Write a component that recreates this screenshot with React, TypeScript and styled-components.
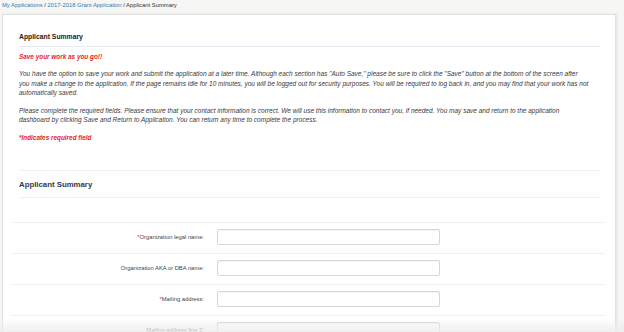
import React from 'react';
import styled, { createGlobalStyle } from 'styled-components';

const GlobalStyle = createGlobalStyle`
  html, body {
    margin: 0;
    padding: 0;
    background: #f6f6f5;
    font-family: "Liberation Sans", Arial, sans-serif;
    overflow: hidden;
  }
`;

interface IField {
  label: string;
  required: boolean;
}

const FIELDS: IField[] = [
  { label: 'Organization legal name:', required: true },
  { label: 'Organization AKA or DBA name:', required: false },
  { label: 'Mailing address:', required: true },
  { label: 'Mailing address line 2:', required: false },
];

const Page = styled.div`
  width: 624px;
  height: 332px;
  position: relative;
  overflow: hidden;
`;

const Breadcrumb = styled.div`
  height: 14px;
  padding-left: 2px;
  font-size: 5.85px;
  line-height: 10px;
  color: #333;
  white-space: nowrap;
`;

const Crumb = styled.a`
  color: #2f7bbd;
  text-decoration: none;
`;

const Panel = styled.div`
  width: 612px;
  margin-left: 2px;
  background: #fff;
  border: 1px solid #e2e2e2;
  box-shadow: 1px 0 2px rgba(0, 0, 0, 0.08);
  min-height: 330px;
`;

const Intro = styled.div`
  padding: 17px 15px 0 16px;
`;

const IntroTitle = styled.div`
  font-size: 6.8px;
  font-weight: bold;
  color: #222;
  line-height: 10px;
  padding-bottom: 4px;
  border-bottom: 1px solid #e6ebf3;
`;

const Alert = styled.p<{ $gap: number }>`
  margin: ${(p) => p.$gap}px 0 0;
  font-size: 6.4px;
  line-height: 9.5px;
  font-weight: bold;
  font-style: italic;
  color: #e8231d;
`;

const Body = styled.p`
  margin: 8px 0 0;
  font-size: 6.5px;
  line-height: 9.5px;
  font-style: italic;
  color: #3a3a3a;
  white-space: nowrap;
`;

const SectionHeader = styled.div`
  margin: 28px 15px 0 16px;
  border-top: 1px solid #f1f1f1;
  border-bottom: 1px solid #f1f1f1;
  padding: 9px 0 8px;
  font-size: 7.8px;
  line-height: 9px;
  font-weight: bold;
  color: #2c3b52;
`;

const Form = styled.div`
  margin: 24px 10px 0 9px;
  border-top: 1px solid #f0f0f0;
`;

const Row = styled.div`
  display: grid;
  grid-template-columns: 192px 223px;
  column-gap: 13px;
  align-items: center;
  padding: 6px 0 8px;
  border-bottom: 1px solid #f0f0f0;
`;

const Label = styled.label`
  text-align: right;
  font-size: 5.8px;
  color: #444;
`;

const Star = styled.span`
  color: #e8231d;
`;

const Input = styled.div`
  height: 14px;
  border: 1px solid #d6d6d6;
  border-radius: 2px;
  background: #fff;
  box-shadow: inset 0 1px 1px rgba(0, 0, 0, 0.04);
`;

const BottomFade = styled.div`
  position: absolute;
  left: 0;
  right: 0;
  bottom: 0;
  height: 14px;
  background: linear-gradient(rgba(238, 238, 238, 0), rgba(236, 236, 236, 0.85));
  pointer-events: none;
`;

export default function App() {
  return (
    <Page>
      <GlobalStyle />
      <Breadcrumb>
        <Crumb href="#">My Applications</Crumb> / <Crumb href="#">2017-2018 Grant Application</Crumb> / Applicant
        Summary
      </Breadcrumb>
      <Panel>
        <Intro>
          <IntroTitle>Applicant Summary</IntroTitle>
          <Alert $gap={4.5}>Save your work as you go!!</Alert>
          <Body>
            You have the option to save your work and submit the application at a later time. Although each section
            has "Auto Save," please be sure to click the "Save" button at the bottom of the screen after
            <br />
            you make a change to the application. If the page remains idle for 10 minutes, you will be logged out for
            security purposes. You will be required to log back in, and you may find that your work has not
            <br />
            automatically saved.
          </Body>
          <Body>
            Please complete the required fields. Please ensure that your contact information is correct. We will use
            this information to contact you, if needed. You may save and return to the application
            <br />
            dashboard by clicking Save and Return to Application. You can return any time to complete the process.
          </Body>
          <Alert $gap={8}>*Indicates required field</Alert>
        </Intro>
        <SectionHeader>Applicant Summary</SectionHeader>
        <Form>
          {FIELDS.map((f) => (
            <Row key={f.label}>
              <Label>
                {f.required && <Star>*</Star>}
                {f.label}
              </Label>
              <Input />
            </Row>
          ))}
        </Form>
      </Panel>
      <BottomFade />
    </Page>
  );
}
